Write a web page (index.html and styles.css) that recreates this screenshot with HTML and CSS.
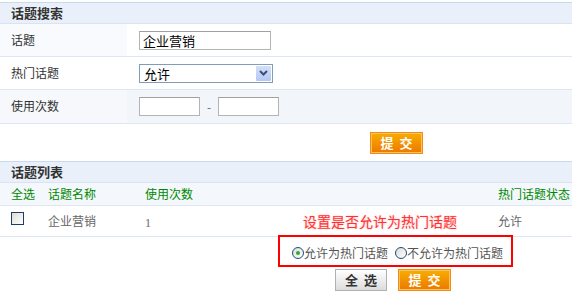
FILE: index.html
```html
<!DOCTYPE html>
<html lang="zh-CN">
<head>
    <meta charset="UTF-8">
    <title>话题管理</title>
    <link rel="stylesheet" href="styles.css">
</head>
<body>
    <div class="panel">
        <div class="panel-title">话题搜索</div>
        <div class="form-row">
            <div class="form-label">话题</div>
            <div class="form-field"><input type="text" class="text-input wide" value="企业营销"></div>
        </div>
        <div class="form-row plain">
            <div class="form-label">热门话题</div>
            <div class="form-field">
                <div class="fake-select">
                    <span>允许</span>
                    <span class="select-arrow">
                        <svg width="9" height="6" viewBox="0 0 9 6"><path d="M1 1 L4.5 4.5 L8 1" fill="none" stroke="#3a4f7a" stroke-width="2"/></svg>
                    </span>
                </div>
            </div>
        </div>
        <div class="form-row alt">
            <div class="form-label">使用次数</div>
            <div class="form-field">
                <input type="text" class="text-input short">
                <span class="dash">-</span>
                <input type="text" class="text-input short">
            </div>
        </div>
        <div class="actions first-actions">
            <button class="btn btn-orange">提交</button>
        </div>
    </div>

    <div class="panel">
        <div class="panel-title">话题列表</div>
        <div class="list-row list-head">
            <div>全选</div>
            <div>话题名称</div>
            <div>使用次数</div>
            <div>热门话题状态</div>
        </div>
        <div class="list-row list-item">
            <div><span class="checkbox"></span></div>
            <div>企业营销</div>
            <div><span class="num">1</span><span class="note">设置是否允许为热门话题</span></div>
            <div>允许</div>
        </div>
        <div class="radio-wrap">
            <div class="radio-box">
                <label class="radio-opt"><span class="radio checked"></span>允许为热门话题</label>
                <label class="radio-opt"><span class="radio"></span>不允许为热门话题</label>
            </div>
        </div>
        <div class="actions list-actions">
            <button class="btn btn-gray">全选</button>
            <button class="btn btn-orange">提交</button>
        </div>
    </div>
</body>
</html>
```

FILE: styles.css
```css
body {
    margin: 0;
    padding-top: 2px;
    font-family: "Noto Sans CJK SC", "Liberation Sans", sans-serif;
    font-size: 12px;
    color: #333;
    background: #fff;
}
.panel-title {
    height: 20px;
    line-height: 20px;
    padding-left: 11px;
    font-size: 13px;
    font-weight: bold;
    color: #333;
    background-color: #e9f0f9;
    border-top: 1px solid #c9daee;
    border-bottom: 1px solid #d8e4f2;
}
.form-row {
    display: flex;
    height: 32px;
    border-bottom: 1px solid #dde7f3;
}
.form-label {
    width: 116px;
    padding-left: 11px;
    line-height: 32px;
    background-color: #f8fafd;
}
.form-field {
    display: flex;
    align-items: center;
    padding-left: 12px;
    flex: 1;
}
.form-row.plain .form-label {
    background-color: #fff;
}
.form-row.alt .form-label {
    background-color: #f6f8fc;
}
.form-row.alt .form-field {
    background-color: #f2f6fb;
}
.form-row.alt {
    height: 33px;
}
.text-input {
    box-sizing: border-box;
    height: 19px;
    padding: 0 3px;
    font-family: "Noto Sans CJK SC", sans-serif;
    font-size: 13px;
    color: #000;
    background: #fff;
    border: 1px solid #b4b4b4;
    border-top-color: #a0a0a0;
    outline: none;
}
.text-input.wide {
    width: 132px;
}
.text-input.short {
    width: 61px;
}
.dash {
    width: 18px;
    text-align: center;
    color: #666;
}
.fake-select {
    box-sizing: border-box;
    width: 134px;
    height: 19px;
    display: flex;
    align-items: center;
    justify-content: space-between;
    padding-left: 4px;
    font-size: 13px;
    color: #000;
    background: #fff;
    border: 1px solid #7f9db9;
}
.select-arrow {
    width: 15px;
    height: 15px;
    margin-right: 1px;
    display: flex;
    align-items: center;
    justify-content: center;
    background: linear-gradient(#d3def9, #b6c8f2);
    border-radius: 1px;
}
.actions {
    display: flex;
    gap: 11px;
}
.first-actions {
    padding: 8px 0 7px 370px;
}
.btn {
    width: 53px;
    height: 22px;
    padding: 0 0 0 6px;
    font-family: "Noto Sans CJK SC", sans-serif;
    font-size: 13px;
    font-weight: bold;
    letter-spacing: 6px;
    line-height: 20px;
    cursor: pointer;
}
.btn-orange {
    color: #fff;
    background: linear-gradient(#f8ad00, #ec7800);
    border: 1px solid #f28b1c;
    box-shadow: inset 0 0 0 1px #fbc45a;
}
.btn-gray {
    width: 52px;
    color: #333;
    background: linear-gradient(#ffffff, #dcdcdc);
    border: 1px solid #b0b0b0;
}
.list-row {
    display: grid;
    grid-template-columns: 37px 97px 353px 1fr;
    padding-left: 11px;
    white-space: nowrap;
    border-bottom: 1px solid #dde7f3;
}
.list-head {
    height: 22px;
    line-height: 22px;
    font-size: 12px;
    color: #008800;
    background-color: #f4f8fc;
}
.list-item {
    height: 30px;
    line-height: 30px;
    color: #666;
}
.checkbox {
    display: inline-block;
    width: 11px;
    height: 11px;
    margin-top: 6px;
    vertical-align: top;
    border: 1px solid #1e3d64;
    background: linear-gradient(135deg, #dcdcd6, #ffffff);
}
.num {
    font-family: "Liberation Serif", serif;
    font-size: 12px;
}
.note {
    margin-left: 152px;
    font-size: 14px;
    color: #ff3333;
    text-shadow: 0 0 2px #ffb0b0;
}
.radio-wrap {
    padding-left: 278px;
    margin-top: -2px;
}
.radio-box {
    box-sizing: border-box;
    width: 235px;
    height: 32px;
    display: flex;
    align-items: center;
    gap: 7px;
    padding: 3px 0 0 12px;
    border: 2px solid #ff0000;
}
.radio-opt {
    display: flex;
    align-items: center;
    font-size: 12px;
    color: #555;
}
.radio {
    box-sizing: border-box;
    width: 12px;
    height: 12px;
    display: inline-flex;
    align-items: center;
    justify-content: center;
    border: 1px solid #1e4d7a;
    border-radius: 50%;
    background: linear-gradient(135deg, #dcdcd6, #ffffff);
}
.radio.checked::after {
    content: "";
    width: 4px;
    height: 4px;
    border-radius: 50%;
    background: #2eaa2e;
}
.list-actions {
    padding: 2px 0 0 335px;
}
```
